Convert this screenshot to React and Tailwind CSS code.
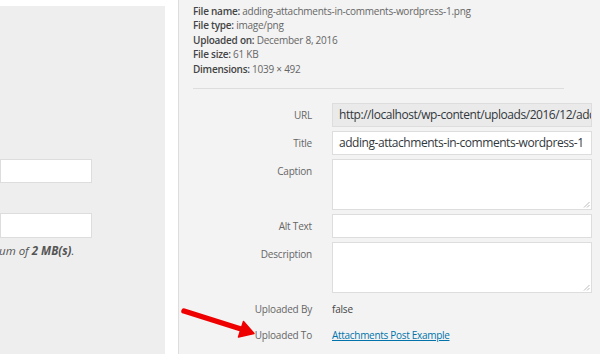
import React from "react";

const font = { fontFamily: '"Open Sans", "Noto Sans", sans-serif' };

function Handle() {
  return (
    <svg className="absolute right-[1px] bottom-[1px]" width="7" height="7" viewBox="0 0 7 7">
      <path d="M6.5 1 L1 6.5 M6.5 4 L4 6.5" stroke="#aaa" strokeWidth="0.8" />
    </svg>
  );
}

function Row({ label, children, top = "mt-[4px]" }) {
  return (
    <div className={`flex ${top}`}>
      <div className="w-[133px] shrink-0 h-[24px] flex items-center justify-end text-[10px] tracking-[-0.2px] text-[#666]">
        {label}
      </div>
      <div className="ml-[20px] w-[260px]">{children}</div>
    </div>
  );
}

export default function App() {
  return (
    <div className="relative w-[600px] h-[354px] bg-white overflow-hidden flex" style={font}>
      {/* left panel */}
      <div className="w-[165px] shrink-0 mt-[6px] bg-[#eeeeee] flex flex-col">
        <div className="mt-[153px] w-[92px] h-[24px] bg-white border border-[#dddddd]" />
        <div className="mt-[30px] w-[92px] h-[25px] bg-white border border-[#dddddd]" />
        <div className="mt-[5px] text-[11.5px] italic text-[#555] leading-[16px] whitespace-nowrap -ml-[1px]">
          um of <b className="font-bold">2 MB(s)</b>.
        </div>
      </div>

      {/* right panel */}
      <div className="ml-[13px] flex-1 bg-[#f3f3f3] border-l border-[#dddddd] flex flex-col">
        <div className="pl-[14px] pt-[4px] text-[10px] tracking-[-0.25px] leading-[14.4px] text-[#666] whitespace-nowrap">
          <div><span className="font-semibold text-[#444]">File name:</span> adding-attachments-in-comments-wordpress-1.png</div>
          <div><span className="font-semibold text-[#444]">File type:</span> image/png</div>
          <div><span className="font-semibold text-[#444]">Uploaded on:</span> December 8, 2016</div>
          <div><span className="font-semibold text-[#444]">File size:</span> 61 KB</div>
          <div><span className="font-semibold text-[#444]">Dimensions:</span> 1039 × 492</div>
        </div>
        <div className="ml-[14px] w-[371px] mt-[12px] border-t border-[#dddddd]" />

        <Row label="URL" top="mt-[14px]">
          <div className="h-[24px] bg-[#eaeaea] border border-[#dddddd] pl-[6px] flex items-center overflow-hidden whitespace-nowrap text-[12px] tracking-[-0.45px] text-[#32373c]">
            http://localhost/wp-content/uploads/2016/12/adding
          </div>
        </Row>
        <Row label="Title">
          <div className="h-[24px] bg-white border border-[#dddddd] pl-[6px] flex items-center overflow-hidden whitespace-nowrap text-[12px] tracking-[-0.45px] text-[#32373c]">
            adding-attachments-in-comments-wordpress-1
          </div>
        </Row>
        <Row label="Caption">
          <div className="relative h-[51px] bg-white border border-[#dddddd]">
            <Handle />
          </div>
        </Row>
        <Row label="Alt Text">
          <div className="h-[24px] bg-white border border-[#dddddd]" />
        </Row>
        <Row label="Description">
          <div className="relative h-[51px] bg-white border border-[#dddddd]">
            <Handle />
          </div>
        </Row>
        <Row label="Uploaded By">
          <div className="h-[24px] flex items-center text-[10px] tracking-[-0.2px] text-[#444]">false</div>
        </Row>
        <Row label="Uploaded To" top="mt-[2px]">
          <div className="h-[24px] flex items-center text-[10px] tracking-[-0.3px]">
            <span className="text-[#0073aa] underline">Attachments Post Example</span>
          </div>
        </Row>
      </div>

      {/* red arrow annotation */}
      <svg className="absolute left-0 top-0 pointer-events-none" width="600" height="354">
        <line x1="184" y1="311" x2="241" y2="329" stroke="#ee0000" strokeWidth="5.5" strokeLinecap="round" />
        <polygon points="254,333.5 238.5,337 243.5,321.5" fill="#ee0000" stroke="#ee0000" strokeWidth="1.5" strokeLinejoin="round" />
      </svg>
    </div>
  );
}
